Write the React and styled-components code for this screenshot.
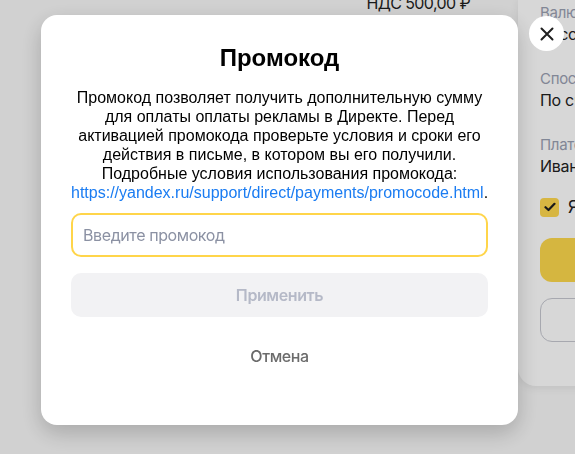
import React from "react";
import styled, { createGlobalStyle } from "styled-components";

const Global = createGlobalStyle`
  html, body { margin: 0; padding: 0; }
  body {
    width: 575px;
    height: 454px;
    overflow: hidden;
    background: #f8f8f8;
    font-family: Inter, "Noto Sans", sans-serif;
  }
`;

const Page = styled.div`
  display: flex;
  width: 575px;
  height: 454px;
  overflow: hidden;
  background: #f8f8f8;
`;

const MainColumn = styled.div`
  width: 518px;
  flex-shrink: 0;
  display: flex;
  flex-direction: column;
  align-items: flex-end;
  padding-right: 48px;
  box-sizing: border-box;
`;

const Total = styled.div`
  margin-top: -7px;
  font-size: 16px;
  line-height: 20px;
  color: #1f1f1f;
  letter-spacing: -0.6px;
`;

const SidePanel = styled.aside`
  width: 320px;
  flex-shrink: 0;
  align-self: flex-start;
  height: 386px;
  box-sizing: border-box;
  background: #ffffff;
  border-bottom-left-radius: 18px;
  box-shadow: 0 2px 8px rgba(0, 0, 0, 0.08);
  padding: 3px 20px 0 22px;
  display: flex;
  flex-direction: column;
`;

const Field = styled.div`
  display: flex;
  flex-direction: column;
  margin-bottom: 24px;
`;

const FieldLabel = styled.div`
  font-size: 15px;
  line-height: 20px;
  color: #9aa0b2;
  letter-spacing: -0.3px;
`;

const FieldValue = styled.div`
  font-size: 16px;
  line-height: 22px;
  color: #222;
  white-space: nowrap;
  letter-spacing: -0.3px;
`;

const CheckRow = styled.div`
  display: flex;
  align-items: center;
  gap: 9px;
  margin-top: -4px;
  font-size: 17px;
  color: #222;
`;

const CheckBox = styled.span`
  width: 19px;
  height: 19px;
  border-radius: 4px;
  background: #ffd84f;
  display: flex;
  align-items: center;
  justify-content: center;
`;

const PanelButton = styled.div`
  margin-top: ${(p) => p.$mt}px;
  height: 44px;
  border-radius: 12px;
  box-sizing: border-box;
  background: ${(p) => (p.$primary ? "#fdd84d" : "transparent")};
  border: ${(p) => (p.$primary ? "none" : "1px solid #c6c8d0")};
`;

const Overlay = styled.div`
  position: fixed;
  inset: 0;
  background: rgba(0, 0, 0, 0.155);
`;

const Modal = styled.div`
  position: fixed;
  left: 41px;
  top: 15px;
  width: 477px;
  height: 410px;
  box-sizing: border-box;
  background: #fff;
  border-radius: 16px;
  box-shadow: 0 8px 22px rgba(0, 0, 0, 0.2);
  padding: 29px 30px 0;
  display: flex;
  flex-direction: column;
  text-align: center;
`;

const Title = styled.h2`
  margin: 0;
  font-family: "Liberation Sans", Arial, sans-serif;
  font-weight: 700;
  font-size: 24px;
  line-height: 28px;
  color: #000;
`;

const Description = styled.p`
  margin: 16px 0 0;
  font-family: "Liberation Sans", Arial, sans-serif;
  font-size: 16px;
  line-height: 19px;
  color: #000;
`;

const Link = styled.a`
  color: #1a7cf2;
  text-decoration: none;
`;

const Input = styled.input`
  margin-top: 11px;
  height: 44px;
  box-sizing: border-box;
  width: 100%;
  border: 2px solid #ffd54a;
  border-radius: 10px;
  padding: 0 10px;
  font-family: Inter, sans-serif;
  font-size: 16px;
  letter-spacing: -0.4px;
  color: #222;
  outline: none;
  caret-color: #222;
  &::placeholder { color: #8b91a3; }
`;

const ApplyButton = styled.button`
  margin-top: 16px;
  height: 44px;
  border: none;
  border-radius: 10px;
  background: #f2f2f4;
  color: #b5b9c7;
  font-family: Inter, sans-serif;
  font-weight: 600;
  font-size: 16px;
  letter-spacing: -0.4px;
`;

const CancelButton = styled.button`
  margin-top: 16px;
  height: 46px;
  border: none;
  background: transparent;
  color: #6b6b6b;
  font-family: Inter, sans-serif;
  font-weight: 500;
  font-size: 16px;
  letter-spacing: -0.4px;
`;

const CloseButton = styled.button`
  position: fixed;
  left: 529px;
  top: 16px;
  width: 35px;
  height: 35px;
  border-radius: 50%;
  border: none;
  background: #fff;
  padding: 0;
  display: flex;
  align-items: center;
  justify-content: center;
`;

export default function App() {
  return (
    <>
      <Global />
      <Page>
        <MainColumn>
          <Total>НДС 500,00 ₽</Total>
        </MainColumn>
        <SidePanel>
          <Field>
            <FieldLabel>Валюта</FieldLabel>
            <FieldValue>Российский рубль</FieldValue>
          </Field>
          <Field>
            <FieldLabel>Способ оплаты</FieldLabel>
            <FieldValue>По счёту</FieldValue>
          </Field>
          <Field>
            <FieldLabel>Плательщик</FieldLabel>
            <FieldValue>Иванов Иван</FieldValue>
          </Field>
          <CheckRow>
            <CheckBox>
              <svg width="12" height="10" viewBox="0 0 12 10">
                <path d="M1.5 5.2 L4.5 8 L10.5 1.8" fill="none" stroke="#1f1f1f" strokeWidth="2.2" strokeLinecap="round" strokeLinejoin="round" />
              </svg>
            </CheckBox>
            Я согласен
          </CheckRow>
          <PanelButton $primary $mt={21} />
          <PanelButton $mt={16} />
        </SidePanel>
      </Page>
      <Overlay />
      <Modal>
        <Title>Промокод</Title>
        <Description>
          Промокод позволяет получить дополнительную сумму для оплаты оплаты рекламы в Директе. Перед
          активацией промокода проверьте условия и сроки его действия в письме, в котором вы его получили.
          Подробные условия использования промокода:{" "}
          <Link href="#">https://yandex.ru/support/direct/payments/promocode.html</Link>.
        </Description>
        <Input placeholder="Введите промокод" autoFocus />
        <ApplyButton disabled>Применить</ApplyButton>
        <CancelButton>Отмена</CancelButton>
      </Modal>
      <CloseButton aria-label="Закрыть">
        <svg width="14" height="14" viewBox="0 0 14 14">
          <path d="M1.5 1.5 L12.5 12.5 M12.5 1.5 L1.5 12.5" stroke="#1f1f1f" strokeWidth="2" strokeLinecap="round" />
        </svg>
      </CloseButton>
    </>
  );
}
